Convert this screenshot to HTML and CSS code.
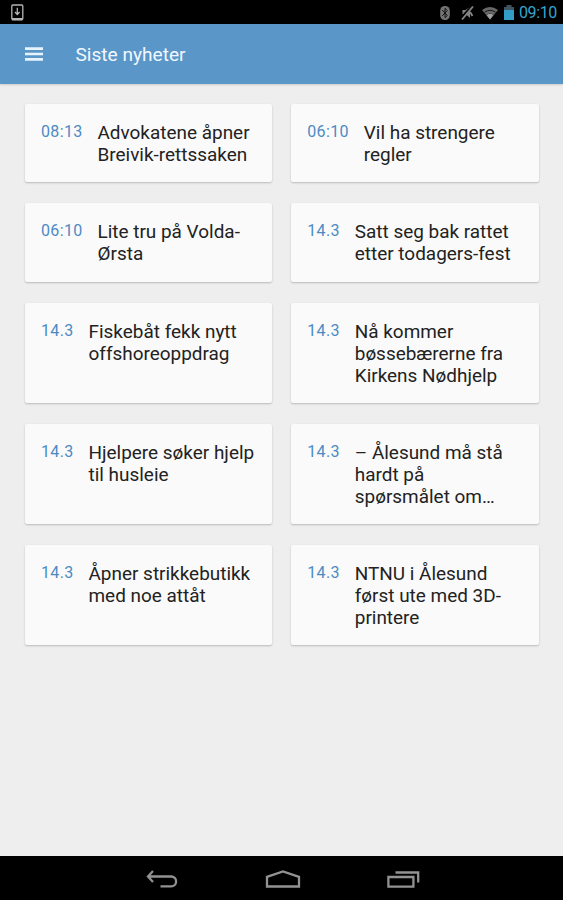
FILE: index.html
```html
<!DOCTYPE html>
<html lang="no">
<head>
<meta charset="utf-8">
<title>Siste nyheter</title>
<link rel="stylesheet" href="styles.css">
</head>
<body>
<div class="status">
  <svg class="download" width="14" height="18" viewBox="0 0 14 18" fill="none" stroke="#b4b4b4"><rect x="1.8" y="1" width="11" height="14.6" rx="1" stroke-width="1.3"/><path d="M2 15.2h10.5" stroke-width="2.4"/><path d="M7.3 3.8v6.5M5 8l2.3 2.5L9.6 8" stroke-width="1.3"/></svg>
  <div class="indicators">
    <svg width="12" height="16" viewBox="0 0 12 16"><rect x="1.2" y="1" width="9.6" height="14" rx="4.6" fill="#747474"/><path d="m3.3 5 5 5.5L6 12.7V3.3l2.3 2.2-5 5.3" fill="none" stroke="#111" stroke-width="1"/></svg>
    <svg class="mute" width="15" height="16" viewBox="0 0 15 16"><path d="M2.5 5h3L10 2v11l-4-3.5H2.5z" fill="#808080"/><path d="M12 1 1 13" stroke="#000" stroke-width="2.2"/><path d="M13 1.5 2 14.5M10 7l2.5 4" stroke="#858585" stroke-width="1.9"/></svg>
    <svg class="wifi" width="18" height="16" viewBox="0 0 18 16"><path d="M1 5Q9-1 17 5L9 14.5z" fill="#686868"/><path d="M3.6 7.2q5.4-3.8 10.8 0M5.8 9.8q3.2-2 6.4 0" fill="none" stroke="#151515" stroke-width="1"/><path d="m5.6 9.9 3.4 4.6 3.4-4.6Q9 7.8 5.6 9.9" fill="#a0a0a0"/></svg>
    <svg class="battery" width="12" height="16" viewBox="0 0 12 16"><path d="M3.5 0h5v2H11v4H1V2h2.5z" fill="#405560"/><path d="M1 5h10v10H1z" fill="#329dc5"/></svg>
    <span class="clock">09:10</span>
  </div>
</div>
<header class="appbar">
  <svg width="18" height="15" viewBox="0 0 18 15"><path d="M0 1.6h18M0 7h18M0 12.4h18" stroke="#e7f3ff" stroke-width="2.6"/></svg>
  <h1>Siste nyheter</h1>
</header>
<main class="grid">
  <article class="card"><time>08:13</time><h2>Advokatene åpner<br>Breivik-rettssaken</h2></article>
  <article class="card"><time>06:10</time><h2>Vil ha strengere<br>regler</h2></article>
  <article class="card"><time>06:10</time><h2>Lite tru på Volda-<br>Ørsta</h2></article>
  <article class="card date"><time>14.3</time><h2>Satt seg bak rattet<br>etter todagers-fest</h2></article>
  <article class="card date"><time>14.3</time><h2>Fiskebåt fekk nytt<br>offshoreoppdrag</h2></article>
  <article class="card date"><time>14.3</time><h2>Nå kommer<br>bøssebærerne fra<br>Kirkens Nødhjelp</h2></article>
  <article class="card date"><time>14.3</time><h2>Hjelpere søker hjelp<br>til husleie</h2></article>
  <article class="card date"><time>14.3</time><h2>– Ålesund må stå<br>hardt på<br>spørsmålet om…</h2></article>
  <article class="card date"><time>14.3</time><h2>Åpner strikkebutikk<br>med noe attåt</h2></article>
  <article class="card date"><time>14.3</time><h2>NTNU i Ålesund<br>først ute med 3D-<br>printere</h2></article>
</main>
<nav class="navbar">
  <svg width="34" height="22" viewBox="0 0 34 22"><path d="m8 1-5 5.5L8 12M3 6.5h23.2a4.9 4.9 0 0 1 0 9.8H15.5"/></svg>
  <svg width="36" height="22" viewBox="0 0 36 22"><path d="M2 16.5V6.8L18 1.5l16 5.3v9.7z"/></svg>
  <svg width="34" height="22" viewBox="0 0 34 22"><path d="M2.4 7h25v9.7h-25zM9.5 2.5h22.7v10"/></svg>
</nav>
</body>
</html>
```
FILE: styles.css
```css
* { box-sizing: border-box; }
body {
  margin: 0;
  height: 900px;
  display: flex;
  flex-direction: column;
  overflow: hidden;
  background: #eee;
  font-family: Roboto, sans-serif;
}
.status {
  height: 24px;
  flex: none;
  padding: 1px 5px 0 10px;
  display: flex;
  align-items: center;
  justify-content: space-between;
  background: #000;
}
.indicators { display: flex; align-items: center; }
.mute { margin-left: 9px; }
.wifi { margin-left: 6px; }
.battery { margin-left: 4px; }
.clock {
  width: 39px;
  margin-left: 4px;
  color: #35a5d0;
  font-size: 16px;
  line-height: 24px;
  white-space: nowrap;
  letter-spacing: -0.4px;
}
.appbar {
  height: 60px;
  flex: none;
  padding: 0 25px;
  display: flex;
  align-items: center;
  gap: 32.5px;
  background: #5b96c8;
  box-shadow: 0 1px 2px rgba(0, 0, 0, 0.15);
}
h1 {
  margin: 0;
  padding-top: 2px;
  color: #f0f8ff;
  font-size: 19.1px;
  font-weight: 400;
  line-height: 24px;
}
.grid {
  flex: 1;
  padding: 20px 24.5px 0 25px;
  display: grid;
  grid-template-columns: 1fr 1fr;
  grid-template-rows: 78px 78.5px 100.5px 100px 100px;
  gap: 21px 19px;
}
.card {
  padding: 17px 0 0 16px;
  display: flex;
  background: #fafafa;
  border-radius: 2px;
  box-shadow: 0 1px 2px rgba(0, 0, 0, 0.22);
}
time {
  width: 56.5px;
  flex: none;
  color: #4d8ac4;
  font-size: 16px;
  line-height: 22px;
  letter-spacing: 0.35px;
}
.date time { width: 47.5px; }
h2 {
  margin: 0;
  padding-top: 1px;
  color: #222;
  font-size: 18.95px;
  font-weight: 400;
  line-height: 22px;
  white-space: nowrap;
}
.navbar {
  height: 44px;
  flex: none;
  padding: 5px 143px 0 145px;
  display: flex;
  align-items: center;
  justify-content: space-between;
  background: #000;
}
.navbar path { fill: none; stroke: #929292; stroke-width: 2.3; }
```
